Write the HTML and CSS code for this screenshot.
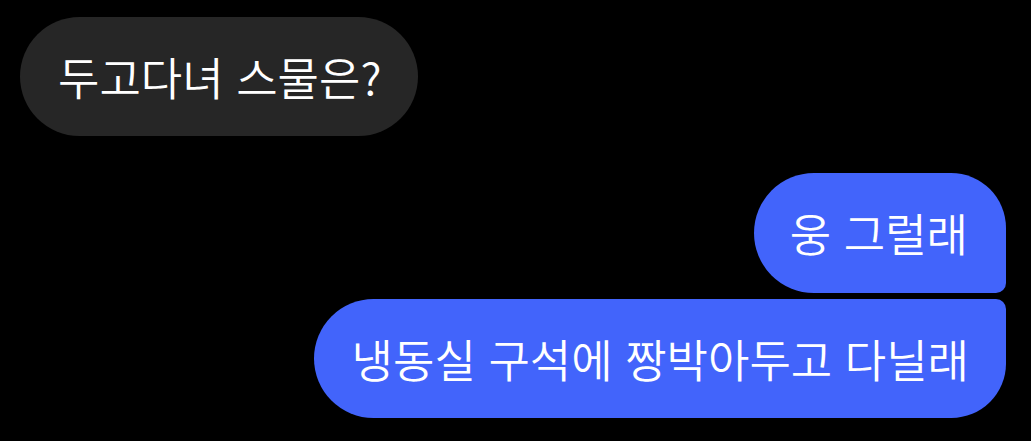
FILE: index.html
```html
<!DOCTYPE html>
<html lang="ko">
<head>
  <meta charset="UTF-8">
  <meta name="viewport" content="width=device-width, initial-scale=1.0">
  <title>대화</title>
  <link rel="stylesheet" href="styles.css">
</head>
<body>
  <div class="chat">
    <div class="bubble received">두고다녀 스물은?</div>

    <div class="group sent">
      <div class="bubble first">웅 그럴래</div>
      <div class="bubble last">냉동실 구석에 짱박아두고 다닐래</div>
    </div>
  </div>
</body>
</html>
```

FILE: styles.css
```css
body {
  margin: 0;
  background: #000;
  font-family: 'Noto Sans CJK KR', 'Noto Sans', sans-serif;
  color: #fff;
}

.chat {
  display: flex;
  flex-direction: column;
  padding: 17px 25px 0 20px;
}

.bubble {
  font-size: 45px;
  font-weight: 350;
  line-height: 119px;
  height: 119px;
  padding: 0 37px 0 38px;
  border-radius: 60px;
  white-space: nowrap;
  box-sizing: border-box;
}

.received {
  align-self: flex-start;
  background: #262626;
}

.group {
  display: flex;
  flex-direction: column;
  align-items: flex-end;
  gap: 6px;
  margin-top: 37px;
}

.sent .bubble {
  background: #4264fb;
}

.sent .first {
  height: 120px;
  line-height: 120px;
  padding: 0 38px 0 36px;
  border-radius: 60px 55px 10px 60px;
}

.sent .last {
  border-radius: 60px 10px 55px 60px;
}
```
